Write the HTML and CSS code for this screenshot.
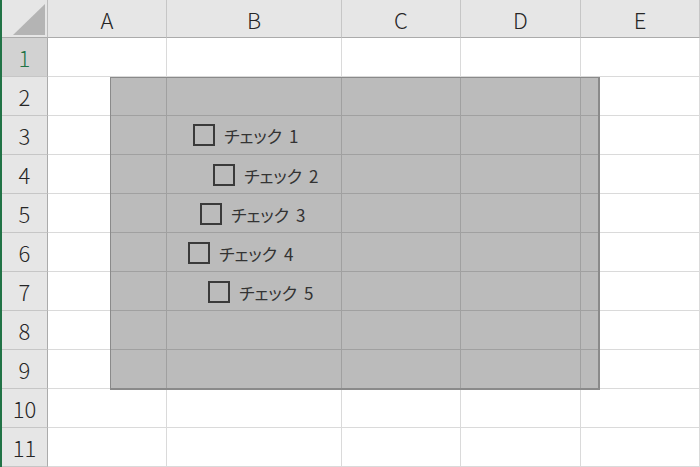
FILE: index.html
```html
<!DOCTYPE html>
<html lang="ja">
<head>
  <meta charset="UTF-8">
  <title>Sheet1</title>
  <link rel="stylesheet" href="styles.css">
</head>
<body>
  <div class="sheet">
    <div class="corner"><span class="tri"></span></div>
    <div class="col-head">A</div>
    <div class="col-head">B</div>
    <div class="col-head">C</div>
    <div class="col-head">D</div>
    <div class="col-head">E</div>

    <div class="row-head selected">1</div>
    <div class="cell"></div><div class="cell"></div><div class="cell"></div><div class="cell"></div><div class="cell"></div>
    <div class="row-head">2</div>
    <div class="cell"></div><div class="cell"></div><div class="cell"></div><div class="cell"></div><div class="cell"></div>
    <div class="row-head">3</div>
    <div class="cell"></div><div class="cell"></div><div class="cell"></div><div class="cell"></div><div class="cell"></div>
    <div class="row-head">4</div>
    <div class="cell"></div><div class="cell"></div><div class="cell"></div><div class="cell"></div><div class="cell"></div>
    <div class="row-head">5</div>
    <div class="cell"></div><div class="cell"></div><div class="cell"></div><div class="cell"></div><div class="cell"></div>
    <div class="row-head">6</div>
    <div class="cell"></div><div class="cell"></div><div class="cell"></div><div class="cell"></div><div class="cell"></div>
    <div class="row-head">7</div>
    <div class="cell"></div><div class="cell"></div><div class="cell"></div><div class="cell"></div><div class="cell"></div>
    <div class="row-head">8</div>
    <div class="cell"></div><div class="cell"></div><div class="cell"></div><div class="cell"></div><div class="cell"></div>
    <div class="row-head">9</div>
    <div class="cell"></div><div class="cell"></div><div class="cell"></div><div class="cell"></div><div class="cell"></div>
    <div class="row-head">10</div>
    <div class="cell"></div><div class="cell"></div><div class="cell"></div><div class="cell"></div><div class="cell"></div>
    <div class="row-head">11</div>
    <div class="cell"></div><div class="cell"></div><div class="cell"></div><div class="cell"></div><div class="cell"></div>

    <!-- shape with form checkboxes, placed freely on the sheet -->
    <div class="shape">
      <label class="check" style="left: 82px; top: 46px;"><span class="box"></span>チェック 1</label>
      <label class="check" style="left: 102px; top: 86px;"><span class="box"></span>チェック 2</label>
      <label class="check" style="left: 89px; top: 125px;"><span class="box"></span>チェック 3</label>
      <label class="check" style="left: 77px; top: 164px;"><span class="box"></span>チェック 4</label>
      <label class="check" style="left: 97px; top: 203px;"><span class="box"></span>チェック 5</label>
    </div>
  </div>
</body>
</html>
```

FILE: styles.css
```css
/* Sheet */
body, html {
  margin: 0;
  padding: 0;
  width: 100%;
  height: 100%;
  background: #ffffff;
  font-family: "Noto Sans CJK JP", "Noto Sans", sans-serif;
  overflow: hidden;
}
.sheet {
  position: relative;
  display: grid;
  grid-template-columns: 46px 119px 175px 119px 120px 119px;
  grid-template-rows: 38px repeat(11, 39px);
  width: 700px;
  height: 467px;
  border-left: 2px solid #217346;
  box-sizing: border-box;
}
.cell {
  border-right: 1px solid #dadada;
  border-bottom: 1px solid #dadada;
}

/* Headers */
.corner {
  position: relative;
  background: #e6e6e6;
  border-right: 1px solid #bdbdbd;
  border-bottom: 1px solid #ababab;
}
.tri {
  position: absolute;
  left: 11px;
  top: 4px;
  width: 32px;
  height: 31px;
  background: #b4b4b4;
  clip-path: polygon(100% 0, 100% 100%, 0 100%);
}
.col-head {
  display: flex;
  align-items: center;
  justify-content: center;
  background: #e6e6e6;
  border-right: 1px solid #c6c6c6;
  border-bottom: 1px solid #ababab;
  color: #262626;
  font-size: 22px;
  font-weight: 300;
}
.row-head {
  display: flex;
  align-items: center;
  justify-content: center;
  background: #e6e6e6;
  border-right: 1px solid #ababab;
  border-bottom: 1px solid #c6c6c6;
  color: #262626;
  font-size: 22px;
  font-weight: 300;
}
.row-head.selected {
  background: #d2d2d2;
  color: #217346;
}

/* Shape over the cells */
.shape {
  position: absolute;
  left: 108px;
  top: 77px;
  width: 490px;
  height: 313px;
  background: rgba(0, 0, 0, 0.265);
  border: 1px solid #8a8a8a;
  border-right-width: 2px;
  border-bottom-width: 2px;
  box-sizing: border-box;
}
.check {
  position: absolute;
  display: flex;
  align-items: center;
  gap: 9px;
  font-size: 17px;
  line-height: 1;
  font-feature-settings: "palt";
  word-spacing: 3px;
  color: #333333;
  white-space: nowrap;
}
.box {
  width: 22px;
  height: 22px;
  border: 2px solid #3a3a3a;
  box-sizing: border-box;
}
```
